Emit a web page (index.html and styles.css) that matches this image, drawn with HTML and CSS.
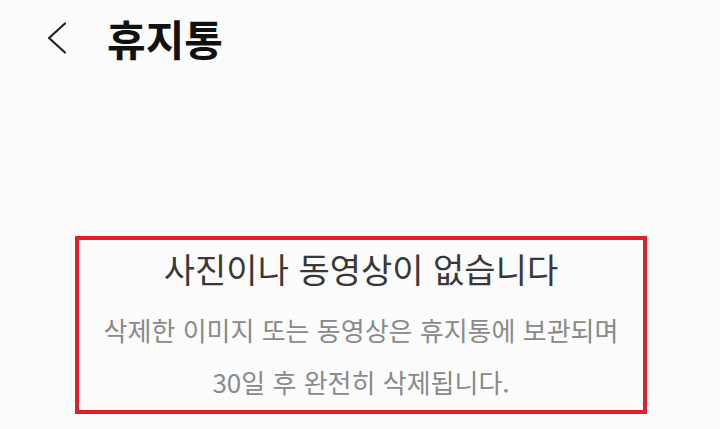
FILE: index.html
```html
<!DOCTYPE html>
<html lang="ko">
<head>
  <meta charset="UTF-8">
  <meta name="viewport" content="width=device-width, initial-scale=1.0">
  <title>휴지통</title>
  <link rel="stylesheet" href="styles.css">
</head>
<body>
  <div class="header">
    <button class="back" aria-label="뒤로">
      <svg width="22" height="34" viewBox="0 0 22 34">
        <path d="M19 2.5 L3 17 L19 31.5" fill="none" stroke="#222" stroke-width="2.2" stroke-linecap="round" stroke-linejoin="round"/>
      </svg>
    </button>
    <h1 class="title">휴지통</h1>
  </div>

  <div class="empty">
    <h2 class="empty-title">사진이나 동영상이 없습니다</h2>
    <p class="empty-desc">삭제한 이미지 또는 동영상은 휴지통에 보관되며<br>30일 후 완전히 삭제됩니다.</p>
  </div>
</body>
</html>
```

FILE: styles.css
```css
body {
  margin: 0;
  background: #fcfcfc;
  font-family: "Noto Sans CJK KR", "Noto Sans", sans-serif;
  width: 720px;
  height: 429px;
  overflow: hidden;
}
.header {
  display: flex;
  align-items: center;
  height: 76px;
  padding-left: 46px;
}
.back {
  background: none;
  border: none;
  padding: 0;
  width: 22px;
  height: 34px;
  margin-right: 39px;
  cursor: pointer;
}
.title {
  margin: 0;
  font-size: 42px;
  font-weight: 700;
  color: #111;
  line-height: 50px;
}
.empty {
  margin: 160px 0 0 75px;
  width: 564px;
  border: 4px solid #e0202a;
  text-align: center;
  padding: 7px 0 2px;
}
.empty-title {
  margin: 0;
  font-size: 34px;
  font-weight: 400;
  color: #383838;
  line-height: 44px;
}
.empty-desc {
  margin: 13px 0 0;
  font-size: 26px;
  color: #8a8a8a;
  line-height: 52px;
}
```
